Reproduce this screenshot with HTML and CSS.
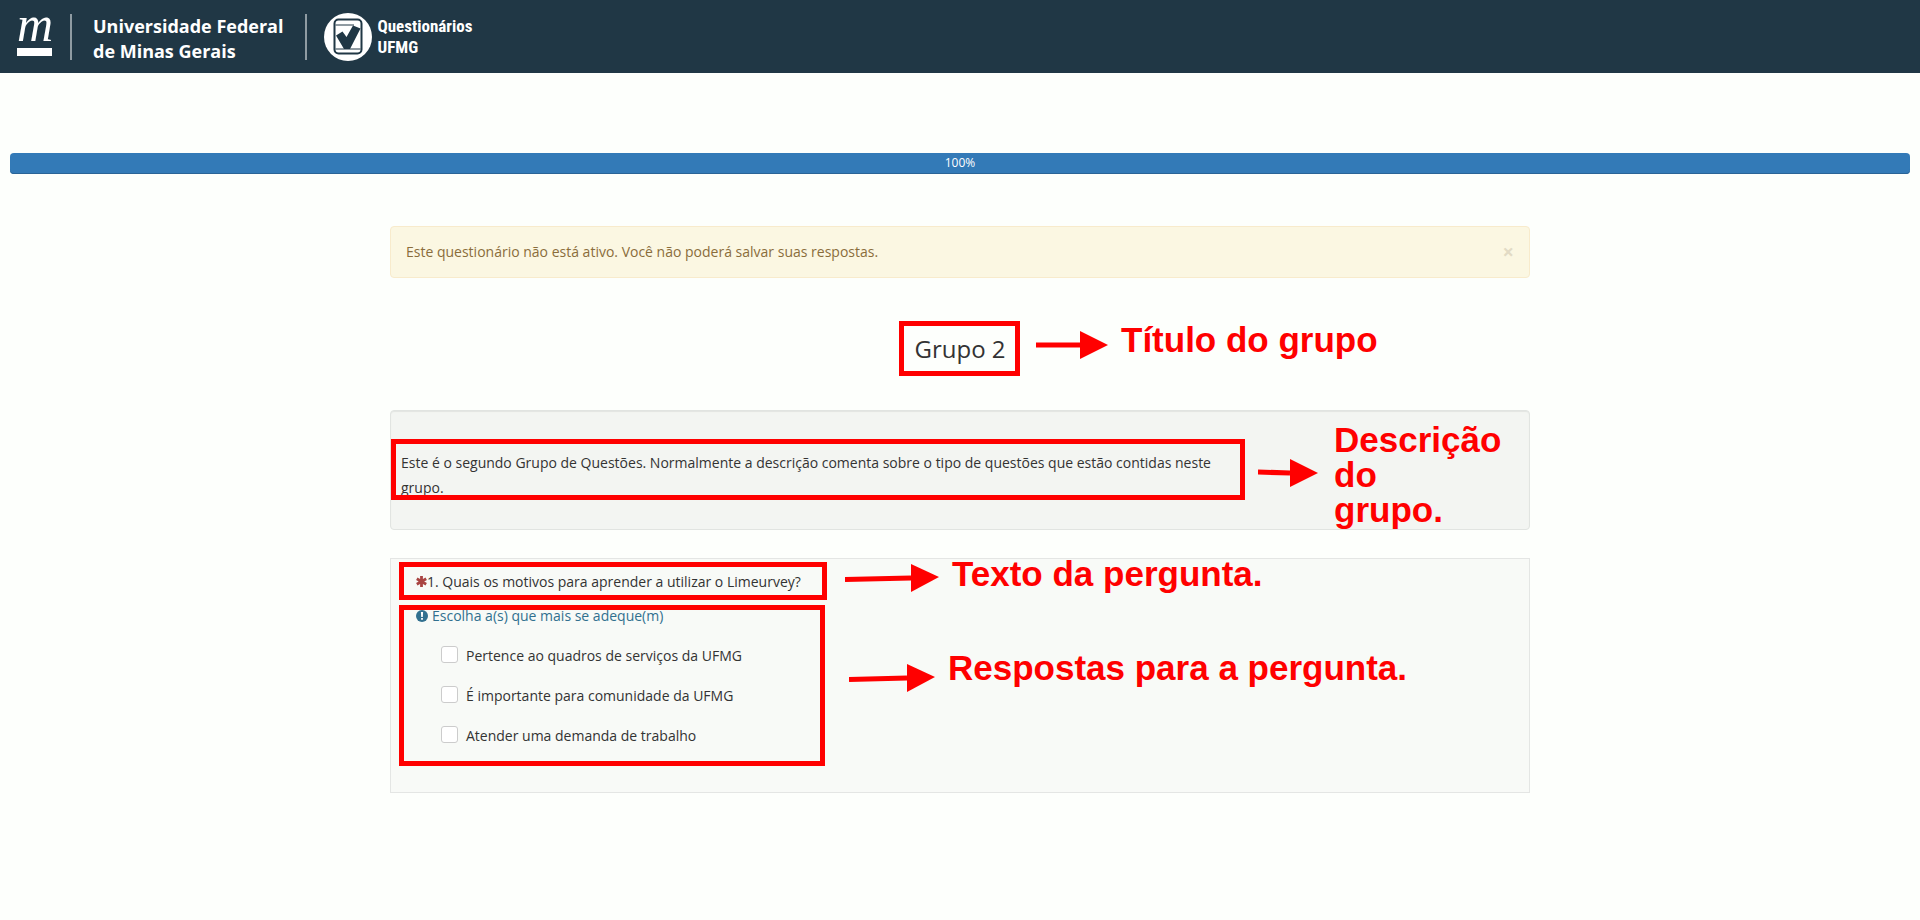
FILE: index.html
```html
<!DOCTYPE html>
<html lang="pt-BR">
<head>
<meta charset="utf-8">
<title>Questionários UFMG</title>
<link rel="stylesheet" href="styles.css">
</head>
<body>
<header class="topbar">
  <span class="logo-m">m</span>
  <span class="divider"></span>
  <p class="university">Universidade Federal<br>de Minas Gerais</p>
  <span class="divider"></span>
  <a class="brand" href="#">
    <svg width="48" height="48" viewBox="0 0 48 48" aria-hidden="true">
      <circle cx="24" cy="24" r="24" fill="#fff"/>
      <rect x="10.500" y="6.500" width="27" height="34" rx="4" fill="#fff" stroke="#203745" stroke-width="2"/>
      <path d="M12 12H36V36H12Z" fill="#fff"/>
      <path d="M12 22.500L18.500 18.500L22.500 24L29 12.500L36.500 15.500L26 36H20Z" fill="#203745"/>
      <path d="M11.500 12H30" stroke="#203745" stroke-width="1"/>
      <path d="M11.500 36H36.500" stroke="#203745" stroke-width="1"/>
    </svg>
    <span class="brand-name">Questionários<br>UFMG</span>
  </a>
</header>

<main>
  <div class="progress" role="progressbar" aria-valuenow="100" aria-valuemin="0" aria-valuemax="100">100%</div>

  <div class="container">
    <div class="alert" role="alert">
      <span>Este questionário não está ativo. Você não poderá salvar suas respostas.</span>
      <button class="close" type="button" aria-label="Fechar">×</button>
    </div>

    <section class="group-title">
      <h1>Grupo 2</h1>
      <span class="mark mark-title"></span>
      <div class="note note-title">
        <svg width="72" height="28" viewBox="0 0 72 28" aria-hidden="true"><path d="M0 14H44" stroke="red" stroke-width="5"/><path d="M44 0L72 14L44 28Z" fill="red"/></svg>
        <span>Título do grupo</span>
      </div>
    </section>

    <section class="description">
      <p>Este é o segundo Grupo de Questões. Normalmente a descrição comenta sobre o tipo de questões que estão contidas neste grupo.</p>
      <span class="mark mark-description"></span>
      <div class="note note-description">
        <svg width="60" height="28" viewBox="0 0 60 28" aria-hidden="true"><path d="M0 13L32 14" stroke="red" stroke-width="5"/><path d="M32 0L60 14L32 28Z" fill="red"/></svg>
        <span>Descrição<br>do<br>grupo.</span>
      </div>
    </section>

    <form class="question">
      <fieldset>
        <legend><svg width="11" height="12" viewBox="0 0 11 12" aria-hidden="true"><path d="M5.500 1V12M0.800 3.800L10.200 9.200M10.200 3.800L0.800 9.200" stroke="#a94442" stroke-width="2.800"/></svg>1. Quais os motivos para aprender a utilizar o Limeurvey?</legend>
        <p class="hint"><svg width="12" height="12" viewBox="0 0 12 12" aria-hidden="true"><circle cx="6" cy="6" r="6" fill="#31708f"/><path d="M4.900 2H7.100L6.800 7H5.200ZM5.100 8H6.900V9.800H5.100Z" fill="#fff"/></svg>Escolha a(s) que mais se adeque(m)</p>
        <ul class="answers">
          <li><input type="checkbox" id="a1"><label for="a1">Pertence ao quadros de serviços da UFMG</label></li>
          <li><input type="checkbox" id="a2"><label for="a2">É importante para comunidade da UFMG</label></li>
          <li><input type="checkbox" id="a3"><label for="a3">Atender uma demanda de trabalho</label></li>
        </ul>
      </fieldset>
      <span class="mark mark-question"></span>
      <span class="mark mark-answers"></span>
      <div class="note note-question">
        <svg width="94" height="28" viewBox="0 0 94 28" aria-hidden="true"><path d="M0 15.500L66 14" stroke="red" stroke-width="5"/><path d="M66 0L94 13L66 28Z" fill="red"/></svg>
        <span>Texto da pergunta.</span>
      </div>
      <div class="note note-answers">
        <svg width="86" height="28" viewBox="0 0 86 28" aria-hidden="true"><path d="M0 15.500L58 14" stroke="red" stroke-width="5"/><path d="M58 0L86 13L58 28Z" fill="red"/></svg>
        <span>Respostas para a pergunta.</span>
      </div>
    </form>
  </div>
</main>
</body>
</html>
```
FILE: styles.css
```css
* { box-sizing: border-box; }

body {
  margin: 0;
  background: #fdfffc;
  color: #333;
  font: 14px/20px "Open Sans", "Noto Sans", sans-serif;
}

p, h1, ul, fieldset, legend { margin: 0; padding: 0; border: 0; }

.topbar {
  display: flex;
  align-items: center;
  height: 73px;
  padding: 0 16px;
  background: #203745;
  color: #fff;
}

.logo-m {
  width: 35px;
  height: 38px;
  margin: 0 18px 0 1px;
  border-bottom: 8px solid #fff;
  font: italic 50px/12px "Liberation Serif", "Times New Roman", serif;
}

.divider {
  width: 2px;
  height: 46px;
  background: #8f9ba2;
}

.university {
  margin: 4px 22px 0 21px;
  font-size: 18px;
  font-weight: 700;
  line-height: 25px;
}

.brand {
  display: flex;
  gap: 5px;
  margin-left: 17px;
  color: #fff;
  text-decoration: none;
}

.brand-name {
  font: bold 17px/21px "Liberation Sans Narrow", "Roboto Condensed", "Liberation Sans", sans-serif;
  padding-top: 3px;
}

.progress {
  margin: 80px 10px 52px;
  height: 21px;
  border-radius: 4px;
  background: #337ab7;
  box-shadow: inset 0 -1px 0 #2a6496;
  color: #fff;
  font-size: 12px;
  text-align: center;
}

.container {
  max-width: 1140px;
  margin: 0 auto;
}

.alert {
  display: flex;
  align-items: center;
  justify-content: space-between;
  padding: 15px;
  border: 1px solid #f8ebcc;
  border-radius: 4px;
  background: #fbf7e2;
  color: #8a6d3b;
}

.close {
  padding: 0;
  border: 0;
  background: none;
  color: #e2dbc5;
  font: bold 20px/20px "Open Sans", sans-serif;
}

.group-title {
  position: relative;
  margin: 56px 0 46px;
  text-align: center;
}

.group-title h1 {
  font-size: 24px;
  font-weight: 400;
  line-height: 30px;
}

.description {
  position: relative;
  margin-bottom: 28px;
  padding: 39px 300px 29px 10px;
  border: 1px solid #e1e4e1;
  border-radius: 4px;
  background: #f3f5f2;
  box-shadow: inset 0 1px 1px #e3e5e2;
  line-height: 25px;
}

.question {
  position: relative;
  padding: 13px 25px 46px;
  border: 1px solid #e4e6e4;
  background: #f8faf7;
}

.hint {
  display: flex;
  align-items: center;
  gap: 4px;
  margin-top: 14px;
  color: #31708f;
}

.answers {
  display: grid;
  gap: 20px;
  padding: 20px 0 0 25px;
  list-style: none;
}

.answers li {
  display: flex;
  align-items: flex-start;
  gap: 8px;
}

.answers input {
  appearance: none;
  width: 17px;
  height: 17px;
  margin: 0;
  border: 1px solid #ccc;
  border-radius: 3px;
  background: #fff;
}

/* Tutorial annotations laid over the survey */
.mark {
  position: absolute;
  border: 5px solid red;
}

.mark-title { left: 509px; top: -13px; width: 121px; height: 55px; }
.mark-description { left: 0; top: 28px; width: 854px; height: 61px; }
.mark-question { left: 8px; top: 3px; width: 428px; height: 38px; }
.mark-answers { left: 8px; top: 46px; width: 426px; height: 161px; }

.note {
  position: absolute;
  display: flex;
  align-items: flex-start;
  gap: 13px;
  color: red;
  font: bold 35px/35px "Liberation Sans", Arial, sans-serif;
  text-align: left;
  white-space: nowrap;
}

.note svg { flex: none; }

.note-title { left: 646px; top: -12px; }
.note-title svg { margin-top: 9px; }
.note-description { left: 867px; top: 11px; gap: 16px; }
.note-description svg { margin-top: 37px; }
.note-question { left: 454px; top: -3px; }
.note-question svg { margin-top: 8px; }
.note-answers { left: 458px; top: 91px; }
.note-answers svg { margin-top: 14px; }
```
